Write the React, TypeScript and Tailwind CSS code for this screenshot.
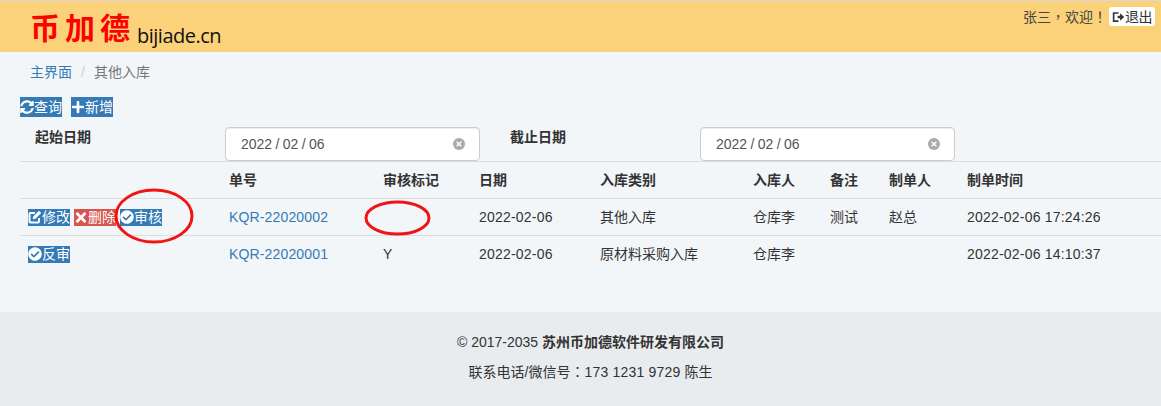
import { FaSyncAlt, FaPlus, FaTimes, FaCheckCircle } from 'react-icons/fa';
import type { ReactNode } from 'react';

const font = "font-['Liberation_Sans','Noto_Sans_CJK_SC',sans-serif]";
const punct = "font-['Noto_Sans_CJK_TC',sans-serif]";

function Tag({ icon, label, red }: { icon: ReactNode; label: string; red?: boolean }) {
    return (
        <span className={`inline-flex h-[17px] items-center text-sm leading-none text-white ${red ? 'bg-[#d9534f]' : 'bg-[#337ab7]'}`}>
            {icon}
            {label}
        </span>
    );
}

function EditIcon() {
    return (
        <svg viewBox="0 0 14 14" className="h-[14px] w-[14px]" fill="none" stroke="#fff">
            <path d="M7 3H2.5A1 1 0 0 0 1.5 4v7.5a1 1 0 0 0 1 1H10a1 1 0 0 0 1-1V8" strokeWidth="2" />
            <path d="M5.5 6.5 11 1l2 2-5.5 5.5-2.5.5z" fill="#fff" strokeWidth="0.5" />
        </svg>
    );
}

function DateInput() {
    return (
        <div className="flex h-[34px] w-[255px] items-center justify-between rounded border border-[#ccc] bg-white pl-[15px] pr-[14px] text-sm text-[#555] shadow-[inset_0_1px_1px_rgba(0,0,0,0.075)]">
            <span className="[word-spacing:-0.5px]">2022 / 02 / 06</span>
            <span className="flex h-3 w-3 items-center justify-center rounded-full bg-[#aaa] text-white">
                <FaTimes className="h-2 w-2" />
            </span>
        </div>
    );
}

const rows = [
    { no: 'KQR-22020002', flag: '', type: '其他入库', note: '测试', maker: '赵总', time: '2022-02-06 17:24:26' },
    { no: 'KQR-22020001', flag: 'Y', type: '原材料采购入库', note: '', maker: '', time: '2022-02-06 14:10:37' },
];

export default function App() {
    return (
        <div className={`relative flex h-[406px] w-[1161px] flex-col overflow-hidden bg-[#f3f6f9] text-sm text-[#333] ${font}`}>
            {/* Header */}
            <div className="flex h-[52px] shrink-0 justify-between border-t border-[#d8d8d8] bg-[#fbd27a]">
                <div className="flex items-end pl-[30px]">
                    <span className="mb-[3px] text-[30px] font-bold leading-[46px] tracking-[5px] text-[#f00] font-['Noto_Sans_CJK_SC',sans-serif]">币加德</span>
                    <span className="mb-[3px] ml-[2px] text-[20px] leading-[26px] tracking-[-0.5px] text-[#111] font-['Open_Sans',sans-serif]">bijiade.cn</span>
                </div>
                <div className="flex items-start pr-[6px] pt-[6px]">
                    <span className="mr-[2px] leading-[18px] text-[#444]">张三<span className={punct}>，</span>欢迎<span className={punct}>！</span></span>
                    <span className="inline-flex h-[19px] w-[46px] items-center whitespace-nowrap rounded-[3px] bg-white px-[3px] text-[14px] leading-none tracking-[-0.5px] text-[#333]">
                        <svg viewBox="0 0 16 14" className="h-3 w-[13px] shrink-0" fill="#333">
                            <path d="M1 1h7v2H3v8h5v2H1zM7 5.5h3V2.5l5 4.5-5 4.5v-3H7z" />
                        </svg>
                        退出
                    </span>
                </div>
            </div>

            {/* Breadcrumb */}
            <div className="flex h-10 items-center pl-[30px]">
                <span className="text-[#337ab7]">主界面</span>
                <span className="px-[9px] text-[#ccc]">/</span>
                <span className="text-[#777]">其他入库</span>
            </div>

            {/* Toolbar */}
            <div className="ml-5 mt-[5px] flex gap-[9px]">
                <span className="inline-flex h-5 items-center bg-[#337ab7] text-sm leading-none text-white">
                    <FaSyncAlt className="h-[14px] w-[14px]" />
                    查询
                </span>
                <span className="inline-flex h-5 items-center bg-[#337ab7] text-sm leading-none text-white">
                    <FaPlus className="h-[14px] w-[14px]" />
                    新增
                </span>
            </div>

            {/* Filters */}
            <div className="ml-5 mt-[10px] flex h-[34px]">
                <span className="w-[205px] pl-[15px] font-bold">起始日期</span>
                <DateInput />
                <span className="w-[220px] pl-[30px] font-bold">截止日期</span>
                <DateInput />
            </div>

            {/* Table */}
            <table className="ml-5 w-[1141px] table-fixed border-collapse">
                <colgroup>
                    <col className="w-[201px]" />
                    <col className="w-[154px]" />
                    <col className="w-[96px]" />
                    <col className="w-[121px]" />
                    <col className="w-[153px]" />
                    <col className="w-[77px]" />
                    <col className="w-[59px]" />
                    <col className="w-[78px]" />
                    <col />
                </colgroup>
                <thead>
                    <tr className="h-[37px] border-y border-[#ddd] text-left">
                        <th className="px-2 font-bold"></th>
                        <th className="px-2 font-bold">单号</th>
                        <th className="px-2 font-bold">审核标记</th>
                        <th className="px-2 font-bold">日期</th>
                        <th className="px-2 font-bold">入库类别</th>
                        <th className="px-2 font-bold">入库人</th>
                        <th className="px-2 font-bold">备注</th>
                        <th className="px-2 font-bold">制单人</th>
                        <th className="px-2 font-bold">制单时间</th>
                    </tr>
                </thead>
                <tbody>
                    {rows.map((row, i) => (
                        <tr key={row.no} className={`h-[37px] ${i === 0 ? 'border-b border-[#ddd]' : ''}`}>
                            <td className="px-2">
                                {i === 0 ? (
                                    <span className="flex gap-1">
                                        <Tag icon={<EditIcon />} label="修改" />
                                        <Tag red icon={<FaTimes className="h-[15px] w-[14px]" />} label="删除" />
                                        <Tag icon={<FaCheckCircle className="h-[14px] w-[14px]" />} label="审核" />
                                    </span>
                                ) : (
                                    <span className="flex">
                                        <Tag icon={<FaCheckCircle className="h-[14px] w-[14px]" />} label="反审" />
                                    </span>
                                )}
                            </td>
                            <td className="px-2 tracking-[0.15px] text-[#337ab7]">{row.no}</td>
                            <td className="px-2">{row.flag}</td>
                            <td className="px-2 tracking-[0.2px]">2022-02-06</td>
                            <td className="px-2">{row.type}</td>
                            <td className="px-2">仓库李</td>
                            <td className="px-2">{row.note}</td>
                            <td className="px-2">{row.maker}</td>
                            <td className="px-2 tracking-[0.2px]">{row.time}</td>
                        </tr>
                    ))}
                </tbody>
            </table>

            {/* Footer */}
            <div className="mt-auto flex h-[94px] flex-col items-center bg-[#e9ecee] pl-5 pt-[20px]">
                <p className="leading-5">
                    © 2017-2035 <span className="font-bold">苏州币加德软件研发有限公司</span>
                </p>
                <p className="mt-[9px] leading-5">联系电话/微信号<span className={punct}>：</span><span className="tracking-[0.2px]">173 1231 9729</span> 陈生</p>
            </div>

            {/* Red annotation circles drawn over the screenshot */}
            <svg className="pointer-events-none absolute left-0 top-0 h-[406px] w-[1161px]" viewBox="0 0 1161 406" fill="none" stroke="#f01414" strokeWidth="3">
                <ellipse cx="154" cy="216" rx="38" ry="26" />
                <ellipse cx="397.5" cy="218" rx="31.5" ry="16" />
            </svg>
        </div>
    );
}
